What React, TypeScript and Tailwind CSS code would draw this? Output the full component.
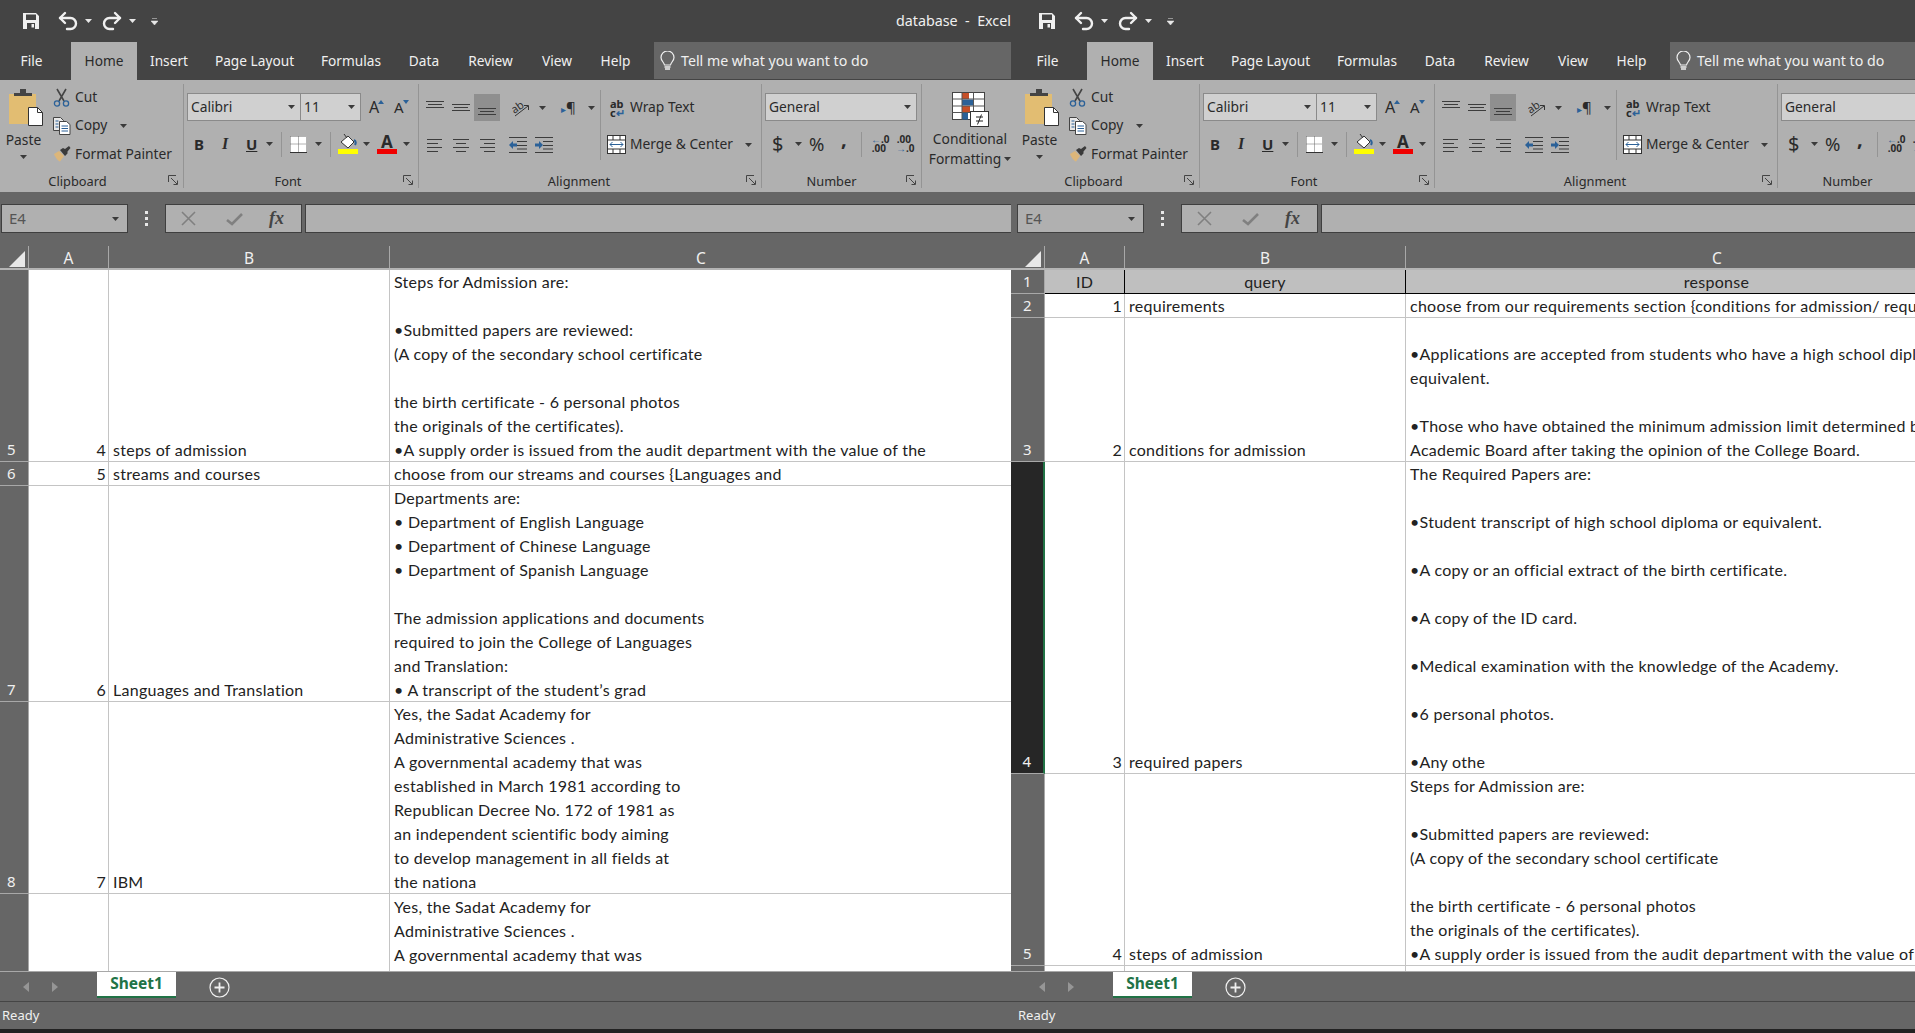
import { Redo2, Undo2 } from 'lucide-react';

type Row = { num: string; h: string; id?: string; b?: string; lines: string[]; top?: boolean; selected?: boolean; head?: boolean };

const LEFT_ROWS: Row[] = [
  {
    num: '5', h: 'h-[192px]', id: '4', b: 'steps of admission',
    lines: ['Steps for Admission are:', '', '•Submitted papers are reviewed:', '(A copy of the secondary school certificate', '', 'the birth certificate - 6 personal photos', 'the originals of the certificates).', '•A supply order is issued from the audit department with the value of the'],
  },
  { num: '6', h: 'h-[24px]', id: '5', b: 'streams and courses', lines: ['choose from our streams and courses {Languages and'] },
  {
    num: '7', h: 'h-[216px]', id: '6', b: 'Languages and Translation',
    lines: ['Departments are:', '• Department of English Language', '• Department of Chinese Language', '• Department of Spanish Language', '', 'The admission applications and documents', 'required to join the College of Languages', 'and Translation:', '• A transcript of the student’s grad'],
  },
  {
    num: '8', h: 'h-[192px]', id: '7', b: 'IBM',
    lines: ['Yes, the Sadat Academy for', 'Administrative Sciences .', 'A governmental academy that was', 'established in March 1981 according to', 'Republican Decree No. 172 of 1981 as', 'an independent scientific body aiming', 'to develop management in all fields at', 'the nationa'],
  },
  { num: '9', h: 'h-[192px]', top: true, lines: ['Yes, the Sadat Academy for', 'Administrative Sciences .', 'A governmental academy that was'] },
];

const RIGHT_ROWS: Row[] = [
  { num: '1', h: 'h-[24px]', id: 'ID', b: 'query', lines: ['response'], head: true },
  { num: '2', h: 'h-[24px]', id: '1', b: 'requirements', lines: ['choose from our requirements section {conditions for admission/ required papers}'] },
  {
    num: '3', h: 'h-[144px]', id: '2', b: 'conditions for admission',
    lines: ['', '•Applications are accepted from students who have a high school diploma or', 'equivalent.', '', '•Those who have obtained the minimum admission limit determined by the', 'Academic Board after taking the opinion of the College Board.'],
  },
  {
    num: '4', h: 'h-[312px]', id: '3', b: 'required papers', selected: true,
    lines: ['The Required Papers are:', '', '•Student transcript of high school diploma or equivalent.', '', '•A copy or an official extract of the birth certificate.', '', '•A copy of the ID card.', '', '•Medical examination with the knowledge of the Academy.', '', '•6 personal photos.', '', '•Any othe'],
  },
  {
    num: '5', h: 'h-[192px]', id: '4', b: 'steps of admission',
    lines: ['Steps for Admission are:', '', '•Submitted papers are reviewed:', '(A copy of the secondary school certificate', '', 'the birth certificate - 6 personal photos', 'the originals of the certificates).', '•A supply order is issued from the audit department with the value of the'],
  },
  { num: '6', h: 'h-[24px]', lines: [] },
];

const TABS = [
  { label: 'File', w: 'w-[51px] mr-[14px]' },
  { label: 'Home', w: 'w-[66px]', active: true },
  { label: 'Insert', w: 'w-[64px]' },
  { label: 'Page Layout', w: 'w-[107px]' },
  { label: 'Formulas', w: 'w-[86px]' },
  { label: 'Data', w: 'w-[60px]' },
  { label: 'Review', w: 'w-[73px]' },
  { label: 'View', w: 'w-[60px]' },
  { label: 'Help', w: 'w-[57px]' },
];

function Caret({ className = '', color = '#3a3a3a' }: { className?: string; color?: string }) {
  return (
    <svg width="7" height="4" viewBox="0 0 7 4" className={`shrink-0 ${className}`}>
      <path d="M0 0h7L3.5 4z" fill={color} />
    </svg>
  );
}

function Sep({ className = 'h-[26px]' }: { className?: string }) {
  return <div className={`w-px shrink-0 bg-[#949494] ${className}`} />;
}

function Launcher() {
  return (
    <svg width="10" height="10" viewBox="0 0 10 10" className="absolute right-[5px] top-[2px]">
      <path d="M.5 7V.5H8M3 3l6 6M5.5 9.5h4v-4" fill="none" stroke="#444" />
    </svg>
  );
}

function Lines({ rows }: { rows: [number, number, number][] }) {
  return (
    <svg width="18" height="16" viewBox="0 0 18 16" className="shrink-0">
      {rows.map(([a, b, y], i) => (
        <path key={i} d={`M${a} ${y + 0.5}H${b}`} stroke="#3c3c3c" />
      ))}
    </svg>
  );
}

function SaveIcon() {
  return (
    <svg width="16" height="16" viewBox="0 0 16 16">
      <path fillRule="evenodd" fill="#f0f0f0" d="M0 0h13l3 3v13H0zM3 1.500v5.500h10V1.500zM4 10v6h8v-6zM8.500 11v3.500H11V11z" />
    </svg>
  );
}

function ScissorsIcon() {
  return (
    <svg width="17" height="19" viewBox="0 0 17 19" className="shrink-0">
      <path d="M4 1l7 12M13 1L6 13" stroke="#444" strokeWidth="1.600" fill="none" />
      <circle cx="4" cy="15.500" r="2.600" fill="none" stroke="#2b6198" strokeWidth="1.300" />
      <circle cx="13" cy="15.500" r="2.600" fill="none" stroke="#2b6198" strokeWidth="1.300" />
    </svg>
  );
}

function CopyIcon() {
  return (
    <svg width="18" height="18" viewBox="0 0 18 18" className="shrink-0">
      <path d="M.5.500h7l3 3v10H.5z" fill="#e8e8e8" stroke="#444" />
      <path d="M6.500 4.500h7l3.500 3v10h-10.500z" fill="#fff" stroke="#444" />
      <path d="M2.500 4h3M2.500 7h3M2.500 10h3M8.500 9h6.500M8.500 11.500h6.500M8.500 14h6.500" stroke="#2b6198" />
    </svg>
  );
}

function BrushIcon() {
  return (
    <svg width="18" height="16" viewBox="0 0 18 16" className="shrink-0">
      <path d="M1 8l5-3 5 5-4 5.500C5 15 2 11 1 8z" fill="#dcb67a" />
      <path d="M7 4l3-2 2 1 4-3 1.500 2-3 3.500v2l-2.500 2.500z" fill="#3a3a3a" />
    </svg>
  );
}

function PasteIcon() {
  return (
    <svg width="36" height="39" viewBox="0 0 36 39" className="shrink-0">
      <rect x="0" y="6" width="27" height="30" fill="#e2bd72" />
      <path d="M5 8V5h6V1h6v4h6v3z" fill="#444" />
      <path d="M19.500 19.500h9l5 5v13h-14z" fill="#fff" stroke="#333" />
      <path d="M28.500 19.500v5h5" fill="none" stroke="#333" />
    </svg>
  );
}

function BorderIcon() {
  return (
    <svg width="17" height="17" viewBox="0 0 17 17" className="shrink-0">
      <rect width="17" height="16" fill="#fff" />
      <path d="M.5.500h16M.5 8h16M8.500.5v16M.5.500v16M16.500.500v16" stroke="#666" strokeDasharray="1 1" />
      <path d="M0 16.500h17" stroke="#333" />
    </svg>
  );
}

function FillIcon() {
  return (
    <div className="flex w-[20px] shrink-0 flex-col items-center">
      <svg width="20" height="15" viewBox="0 0 20 15">
        <path d="M3 8l7-6 6 6-6 6z" fill="#fff" stroke="#333" />
        <path d="M6 0l3 4" stroke="#333" />
        <path d="M16 6c2 1 2 3 1 5" stroke="#2b6198" strokeWidth="2" fill="none" />
      </svg>
      <div className="h-[5px] w-[20px] bg-[#ffff00]" />
    </div>
  );
}

function GrowA({ size, dir }: { size: string; dir: 'up' | 'down' }) {
  return (
    <div className="flex w-[17px] shrink-0 items-start">
      <span className={`${size} leading-[17px]`}>A</span>
      <svg width="6" height="4" viewBox="0 0 6 4" className="-ml-[1px] mt-[1px]">
        <path d={dir === 'up' ? 'M0 4h6L3 0z' : 'M0 0h6L3 4z'} fill="#2b6198" />
      </svg>
    </div>
  );
}

function OrientationIcon() {
  return (
    <svg width="18" height="18" viewBox="0 0 18 18" className="shrink-0">
      <text x="0" y="12" fontSize="11" fill="#333" transform="rotate(-35 6 10)" fontFamily="Noto Sans">ab</text>
      <path d="M3 17L16 7M12 6.500h4.500V11" stroke="#333" fill="none" />
    </svg>
  );
}

function IndentIcon({ flip }: { flip?: boolean }) {
  return (
    <svg width="18" height="16" viewBox="0 0 18 16" className="shrink-0">
      <path d="M0 .5h18M8 4.500h10M8 8.500h10M8 12h10M0 15.500h18" stroke="#3c3c3c" />
      {flip ? (
        <path d="M0 6.500h4V4l4 4-4 4V9.500H0z" fill="#2b6198" />
      ) : (
        <path d="M8 6.500H4V4L0 8l4 4V9.500h4z" fill="#2b6198" />
      )}
    </svg>
  );
}

function MergeIcon() {
  return (
    <svg width="19" height="19" viewBox="0 0 19 19" className="shrink-0">
      <rect x=".5" y=".5" width="18" height="18" fill="#fff" stroke="#333" />
      <path d="M.5 5h18M.5 14h18M6 .5V5M13 .5V5M6 14v5M13 14v5" stroke="#333" />
      <path d="M3 9.500h13M5.500 7L3 9.500 5.500 12M13.500 7L16 9.500 13.500 12" stroke="#2b6198" fill="none" />
    </svg>
  );
}

function CondFormatIcon() {
  return (
    <svg width="37" height="35" viewBox="0 0 37 35" className="shrink-0">
      <rect x=".5" y=".5" width="32" height="27" fill="#fff" stroke="#444" />
      <rect x="10" y="1" width="7" height="6" fill="#c64f27" />
      <rect x="10" y="7.500" width="11" height="6" fill="#2b6198" />
      <rect x="10" y="14" width="8" height="6" fill="#c64f27" />
      <rect x="10" y="20.500" width="6" height="7" fill="#2b6198" />
      <path d="M.5 7h32M.5 14h32M.5 20.500h32M10 .5v27M21.500.500v27" stroke="#555" />
      <rect x="18.500" y="19.500" width="18" height="15" fill="#fff" stroke="#333" />
      <path d="M24 25h7M24 29h7M29.500 22.500l-4 10" stroke="#222" fill="none" />
    </svg>
  );
}

function BulbIcon() {
  return (
    <svg width="15" height="20" viewBox="0 0 15 20" className="shrink-0">
      <path d="M4.500 14C4 11 1 10 1 6.500a6.500 6.500 0 0 1 13 0C14 10 11 11 10.500 14z" fill="none" stroke="#f0f0f0" strokeWidth="1.200" />
      <path d="M4.500 16h6M5 18h5" stroke="#f0f0f0" strokeWidth="1.500" />
    </svg>
  );
}

function Ribbon() {
  return (
    <div className="flex h-[112px] shrink-0 bg-[#b0b0b0] pl-[5px] pt-[4px] font-['Noto_Sans',sans-serif] text-[13.8px] text-[#2a2a2a]">
      {/* Clipboard */}
      <div className="flex h-[104px] w-[184px] shrink-0 flex-col border-r border-[#949494]">
        <div className="flex h-[90px]">
          <div className="flex w-[47px] flex-col items-center pt-[4px]">
            <div className="ml-[7px]"><PasteIcon /></div>
            <span className="mt-[3px] leading-[20px]">Paste</span>
            <Caret className="mt-[5px]" />
          </div>
          <div className="-mt-[1px] flex flex-col">
            <div className="ml-[6px] flex h-[28.5px] items-center gap-[5px]"><ScissorsIcon /><span>Cut</span></div>
            <div className="ml-[6px] flex h-[28.5px] items-center gap-[4px]"><CopyIcon /><span>Copy</span><Caret className="ml-[9px]" /></div>
            <div className="ml-[6px] flex h-[28.5px] items-center gap-[4px]"><BrushIcon /><span className="whitespace-nowrap">Format Painter</span></div>
          </div>
        </div>
        <div className="relative flex flex-1 justify-center pr-[28px] pt-[1px] text-[12.8px] leading-[14px]">Clipboard<Launcher /></div>
      </div>

      {/* Font */}
      <div className="flex h-[104px] w-[235px] shrink-0 flex-col border-r border-[#949494]">
        <div className="h-[90px] pl-[3px] pt-[9px]">
          <div className="flex h-[28px] items-center">
            <div className="flex h-[28px] w-[114px] items-center justify-between border border-[#8a8a8a] bg-[#d0d0d0] pl-[3px] pr-[5px]"><span>Calibri</span><Caret /></div>
            <div className="flex h-[28px] w-[60px] items-center justify-between border border-l-0 border-[#8a8a8a] bg-[#d0d0d0] pl-[3px] pr-[5px]"><span>11</span><Caret /></div>
            <div className="ml-[8px]"><GrowA size="text-[16px]" dir="up" /></div>
            <div className="ml-[8px]"><GrowA size="text-[15px]" dir="down" /></div>
          </div>
          <div className="mt-[9px] flex h-[28px] items-center">
            <span className="ml-[7px] w-[10px] text-[15px] font-bold">B</span>
            <span className="ml-[18px] w-[10px] font-['Liberation_Serif',serif] text-[16px] font-bold italic">I</span>
            <span className="ml-[14px] w-[11px] text-[15px] font-bold underline">U</span>
            <Caret className="ml-[9px]" />
            <Sep className="ml-[8px] h-[25px]" />
            <div className="ml-[8px]"><BorderIcon /></div>
            <Caret className="ml-[8px]" />
            <Sep className="ml-[8px] h-[25px]" />
            <div className="ml-[7px]"><FillIcon /></div>
            <Caret className="ml-[5px]" />
            <div className="ml-[7px] flex w-[20px] flex-col items-center">
              <span className="h-[15px] text-[17px] font-bold leading-[15px]">A</span>
              <div className="h-[5px] w-[20px] bg-[#f00000]" />
            </div>
            <Caret className="ml-[6px]" />
          </div>
        </div>
        <div className="relative flex flex-1 justify-center pr-[26px] pt-[1px] text-[12.8px] leading-[14px]">Font<Launcher /></div>
      </div>

      {/* Alignment */}
      <div className="flex h-[104px] w-[343px] shrink-0 flex-col border-r border-[#949494]">
        <div className="flex h-[90px]">
          <div className="pt-[10px]">
            <div className="flex h-[27px] items-center">
              <div className="ml-[7px]"><Lines rows={[[0, 18, 1], [2, 16, 4], [0, 18, 7]]} /></div>
              <div className="ml-[8px]"><Lines rows={[[0, 18, 4], [2, 16, 7], [0, 18, 10]]} /></div>
              <div className="ml-[4px] flex h-[27px] w-[26px] items-center justify-center bg-[#8f8f8f]"><Lines rows={[[0, 18, 8], [2, 16, 11], [0, 18, 14]]} /></div>
              <Sep className="ml-[4px]" />
              <div className="ml-[7px]"><OrientationIcon /></div>
              <Caret className="ml-[9px]" />
              <Sep className="ml-[6px]" />
              <span className="ml-[8px] w-[19px] whitespace-nowrap text-[15px] leading-none"><span className="text-[10px] text-[#2b6198]">▸</span>¶</span>
              <Caret className="ml-[8px]" />
            </div>
            <div className="mt-[10px] flex h-[27px] items-center">
              <div className="ml-[8px]"><Lines rows={[[0, 15, 2], [0, 11, 6], [0, 15, 10], [0, 11, 14]]} /></div>
              <div className="ml-[7px]"><Lines rows={[[1, 17, 2], [4, 14, 6], [1, 17, 10], [4, 14, 14]]} /></div>
              <div className="ml-[7px]"><Lines rows={[[3, 18, 2], [7, 18, 6], [3, 18, 10], [7, 18, 14]]} /></div>
              <Sep className="ml-[5px]" />
              <div className="ml-[8px]"><IndentIcon /></div>
              <div className="ml-[8px]"><IndentIcon flip /></div>
            </div>
          </div>
          <Sep className="ml-[5px] mt-[6px] h-[70px]" />
          <div className="pt-[10px]">
            <div className="flex h-[27px] items-center">
              <div className="ml-[9px] flex w-[15px] flex-col text-[11px] font-bold leading-[9px]"><span>ab</span><span className="whitespace-nowrap">c<span className="text-[#2b6198]">↵</span></span></div>
              <span className="ml-[5px] whitespace-nowrap">Wrap Text</span>
            </div>
            <div className="mt-[10px] flex h-[27px] items-center">
              <div className="ml-[6px]"><MergeIcon /></div>
              <span className="ml-[4px] whitespace-nowrap">Merge &amp; Center</span>
              <Caret className="ml-[12px]" />
            </div>
          </div>
        </div>
        <div className="relative flex flex-1 justify-center pr-[22px] pt-[1px] text-[12.8px] leading-[14px]">Alignment<Launcher /></div>
      </div>

      {/* Number */}
      <div className="flex h-[104px] w-[160px] shrink-0 flex-col border-r border-[#949494]">
        <div className="h-[90px] pl-[3px] pt-[9px]">
          <div className="flex h-[28px] w-[152px] items-center justify-between border border-[#8a8a8a] bg-[#d0d0d0] pl-[3px] pr-[5px]"><span>General</span><Caret /></div>
          <div className="mt-[9px] flex h-[28px] items-center">
            <span className="ml-[7px] w-[11px] shrink-0 text-[20px] leading-none">$</span>
            <Caret className="ml-[12px]" />
            <span className="ml-[7px] w-[17px] shrink-0 text-[18.5px] leading-none">%</span>
            <span className="-mt-[11px] ml-[15px] w-[6px] shrink-0 text-[20px] font-bold leading-none">,</span>
            <Sep className="ml-[14px] h-[25px]" />
            <div className="ml-[9px] w-[15px] shrink-0 whitespace-nowrap text-right text-[10px] font-bold leading-[9px]"><div><span className="text-[#2b6198]">←</span>.0</div><div>.00</div></div>
            <div className="ml-[10px] w-[15px] shrink-0 whitespace-nowrap text-right text-[10px] font-bold leading-[9px]"><div>.00</div><div><span className="text-[#2b6198]">→</span>.0</div></div>
          </div>
        </div>
        <div className="relative flex flex-1 justify-center pr-[20px] pt-[1px] text-[12.8px] leading-[14px]">Number<Launcher /></div>
      </div>

      {/* Styles */}
      <div className="flex w-[96px] shrink-0 flex-col items-center pt-[8px] leading-[20px]">
        <CondFormatIcon />
        <span className="mt-[2px]">Conditional</span>
        <span className="flex items-center gap-[3px] whitespace-nowrap">Formatting<Caret /></span>
      </div>
    </div>
  );
}

function FormulaBar() {
  return (
    <div className="flex h-[54px] shrink-0 bg-[#666666] pl-[5px] pt-[12px]">
      <div className="ml-[1px] flex h-[29px] w-[127px] shrink-0 items-center justify-between border border-[#3f3f3f] bg-[#b0b0b0] pl-[7px] pr-[8px] font-['Noto_Sans',sans-serif] text-[15px] text-[#555]">
        <span>E4</span><Caret />
      </div>
      <div className="flex h-[29px] w-[37px] shrink-0 flex-col items-center justify-center gap-[3px]">
        <div className="h-[3px] w-[3px] bg-[#e8e8e8]" />
        <div className="h-[3px] w-[3px] bg-[#e8e8e8]" />
        <div className="h-[3px] w-[3px] bg-[#e8e8e8]" />
      </div>
      <div className="flex h-[29px] w-[137px] shrink-0 items-center border border-[#3f3f3f] bg-[#b0b0b0]">
        <svg width="15" height="15" viewBox="0 0 15 15" className="ml-[15px]"><path d="M1 1l13 13M14 1L1 14" stroke="#808080" strokeWidth="1.600" /></svg>
        <svg width="17" height="14" viewBox="0 0 17 14" className="ml-[30px]"><path d="M1 8l5 4L16 2" stroke="#808080" strokeWidth="2.600" fill="none" /></svg>
        <span className="ml-[26px] font-['Liberation_Serif',serif] text-[18px] font-bold italic text-[#444]">fx</span>
      </div>
      <div className="ml-[3px] h-[29px] min-w-0 flex-1 border-y border-l border-[#3f3f3f] bg-[#b0b0b0]" />
    </div>
  );
}

function ColumnHeaders() {
  return (
    <div className="flex h-[24px] shrink-0 border-b-2 border-[#b4b4b4] bg-[#666666] font-['Noto_Sans',sans-serif] text-[15.5px] leading-[25px] text-[#f0f0f0]">
      <div className="flex w-[34px] shrink-0 items-start justify-end border-r border-[#a8a8a8] pr-[3px] pt-[5px]">
        <svg width="16" height="16" viewBox="0 0 16 16"><path d="M16 0v16H0z" fill="#e8e8e8" /></svg>
      </div>
      <div className="w-[80px] shrink-0 border-r border-[#a8a8a8] text-center">A</div>
      <div className="w-[281px] shrink-0 border-r border-[#a8a8a8] text-center">B</div>
      <div className="w-[622px] shrink-0 text-center">C</div>
    </div>
  );
}

function SheetRow({ row }: { row: Row }) {
  const line = row.head ? 'border-black' : 'border-[#c4c4c4]';
  const bg = row.head ? 'bg-[#bfbfbf]' : 'bg-white';
  const align = row.top ? 'justify-start' : 'justify-end';
  return (
    <div className={`flex shrink-0 ${row.h}`}>
      <div className={`flex w-[34px] shrink-0 flex-col justify-end border-b border-r border-[#a8a8a8] text-center font-['Noto_Sans',sans-serif] text-[15px] leading-[24px] text-[#f0f0f0] ${row.selected ? 'border-r-2 border-r-[#217346] bg-[#262626]' : 'bg-[#666666]'}`}>
        {row.num}
      </div>
      <div className={`flex w-[80px] shrink-0 items-end border-b border-r ${line} ${bg} ${row.head ? 'justify-center' : 'justify-end pr-[2px]'}`}>
        <div className="h-[24px]">{row.id}</div>
      </div>
      <div className={`flex w-[281px] shrink-0 items-end border-b border-r ${line} ${bg} ${row.head ? 'justify-center' : 'pl-[4px]'}`}>
        <div className="h-[24px] whitespace-nowrap">{row.b}</div>
      </div>
      <div className={`flex w-[1000px] shrink-0 flex-col border-b ${line} ${bg} ${align} pl-[4px]`}>
        {row.lines.map((l, i) => (
          <div key={i} className={`h-[24px] shrink-0 whitespace-nowrap ${row.head ? 'w-[613px] text-center' : ''}`}>{l}</div>
        ))}
      </div>
    </div>
  );
}

function SheetTabs() {
  return (
    <div className="flex h-[30px] shrink-0 border-t border-[#a8a8a8] bg-[#666666] pl-[5px]">
      <svg width="6" height="10" viewBox="0 0 6 10" className="ml-[23px] mt-[10px]"><path d="M6 0v10L0 5z" fill="#969696" /></svg>
      <svg width="6" height="10" viewBox="0 0 6 10" className="ml-[23px] mt-[10px]"><path d="M0 0v10l6-5z" fill="#969696" /></svg>
      <div className="ml-[39px] flex h-[26px] w-[79px] items-center justify-center border-b-2 border-[#217346] bg-white font-['Noto_Sans',sans-serif] text-[15.5px] font-bold text-[#217346]">
        Sheet1
      </div>
      <svg width="21" height="21" viewBox="0 0 21 21" className="ml-[33px] mt-[5px]">
        <circle cx="10.500" cy="10.500" r="9.500" fill="none" stroke="#f0f0f0" strokeWidth="1.200" />
        <path d="M10.500 5.500v10M5.500 10.500h10" stroke="#f0f0f0" strokeWidth="1.800" />
      </svg>
    </div>
  );
}

function ExcelWindow({ second, rows }: { second: boolean; rows: Row[] }) {
  return (
    <div className={`flex h-[1029px] w-[1016px] shrink-0 flex-col overflow-hidden ${second ? '' : '-ml-[5px]'}`}>
      {/* title bar */}
      <div className="flex h-[42px] shrink-0 items-center bg-[#444444] pl-[5px] font-['Noto_Sans',sans-serif] text-[14.3px] text-[#f0f0f0]">
        <div className="ml-[23px]"><SaveIcon /></div>
        <Undo2 size={24} strokeWidth={2.4} color="#f0f0f0" className="ml-[17px]" />
        <Caret color="#e8e8e8" className="ml-[5px]" />
        <Redo2 size={24} strokeWidth={2.4} color="#f0f0f0" className="ml-[8px]" />
        <Caret color="#e8e8e8" className="ml-[5px]" />
        <svg width="7" height="7" viewBox="0 0 7 7" className="ml-[15px]"><path d="M1 .5h5M0 3h7L3.500 7z" fill="#e8e8e8" stroke="#e8e8e8" strokeWidth=".5" /></svg>
        <span className="ml-auto whitespace-pre">{second ? '' : 'database  -  Excel'}</span>
      </div>

      {/* tabs */}
      <div className="flex h-[38px] shrink-0 items-end bg-[#444444] pl-[11px] font-['Noto_Sans',sans-serif] text-[13.7px]">
        {TABS.map((t) => (
          <div key={t.label} className={`flex h-[38px] shrink-0 items-center justify-center ${t.w} ${t.active ? 'bg-[#b0b0b0] text-[#2a2a2a]' : 'text-[#f0f0f0]'}`}>
            {t.label}
          </div>
        ))}
        <div className="ml-[10px] flex h-[37px] min-w-0 flex-1 items-center self-start bg-[#666666] text-[14.2px] text-[#f0f0f0]">
          <div className="ml-[6px]"><BulbIcon /></div>
          <span className="ml-[6px] whitespace-nowrap">Tell me what you want to do</span>
        </div>
      </div>

      <Ribbon />
      <FormulaBar />
      <ColumnHeaders />

      <div className="min-h-0 flex-1 overflow-hidden bg-white font-['Lato',sans-serif] text-[16px] leading-[26px] tracking-[0.27px] text-[#222222]">
        {rows.map((r) => <SheetRow key={r.num} row={r} />)}
      </div>

      <SheetTabs />

      {/* status bar */}
      <div className="flex h-[28px] shrink-0 items-center border-t border-[#454545] bg-[#666666] pl-[7px] font-['Noto_Sans',sans-serif] text-[13px] text-[#f0f0f0]">
        Ready
      </div>
    </div>
  );
}

export default function App() {
  return (
    <div className="flex h-screen overflow-hidden bg-[#222222]">
      <ExcelWindow second={false} rows={LEFT_ROWS} />
      <ExcelWindow second rows={RIGHT_ROWS} />
    </div>
  );
}
